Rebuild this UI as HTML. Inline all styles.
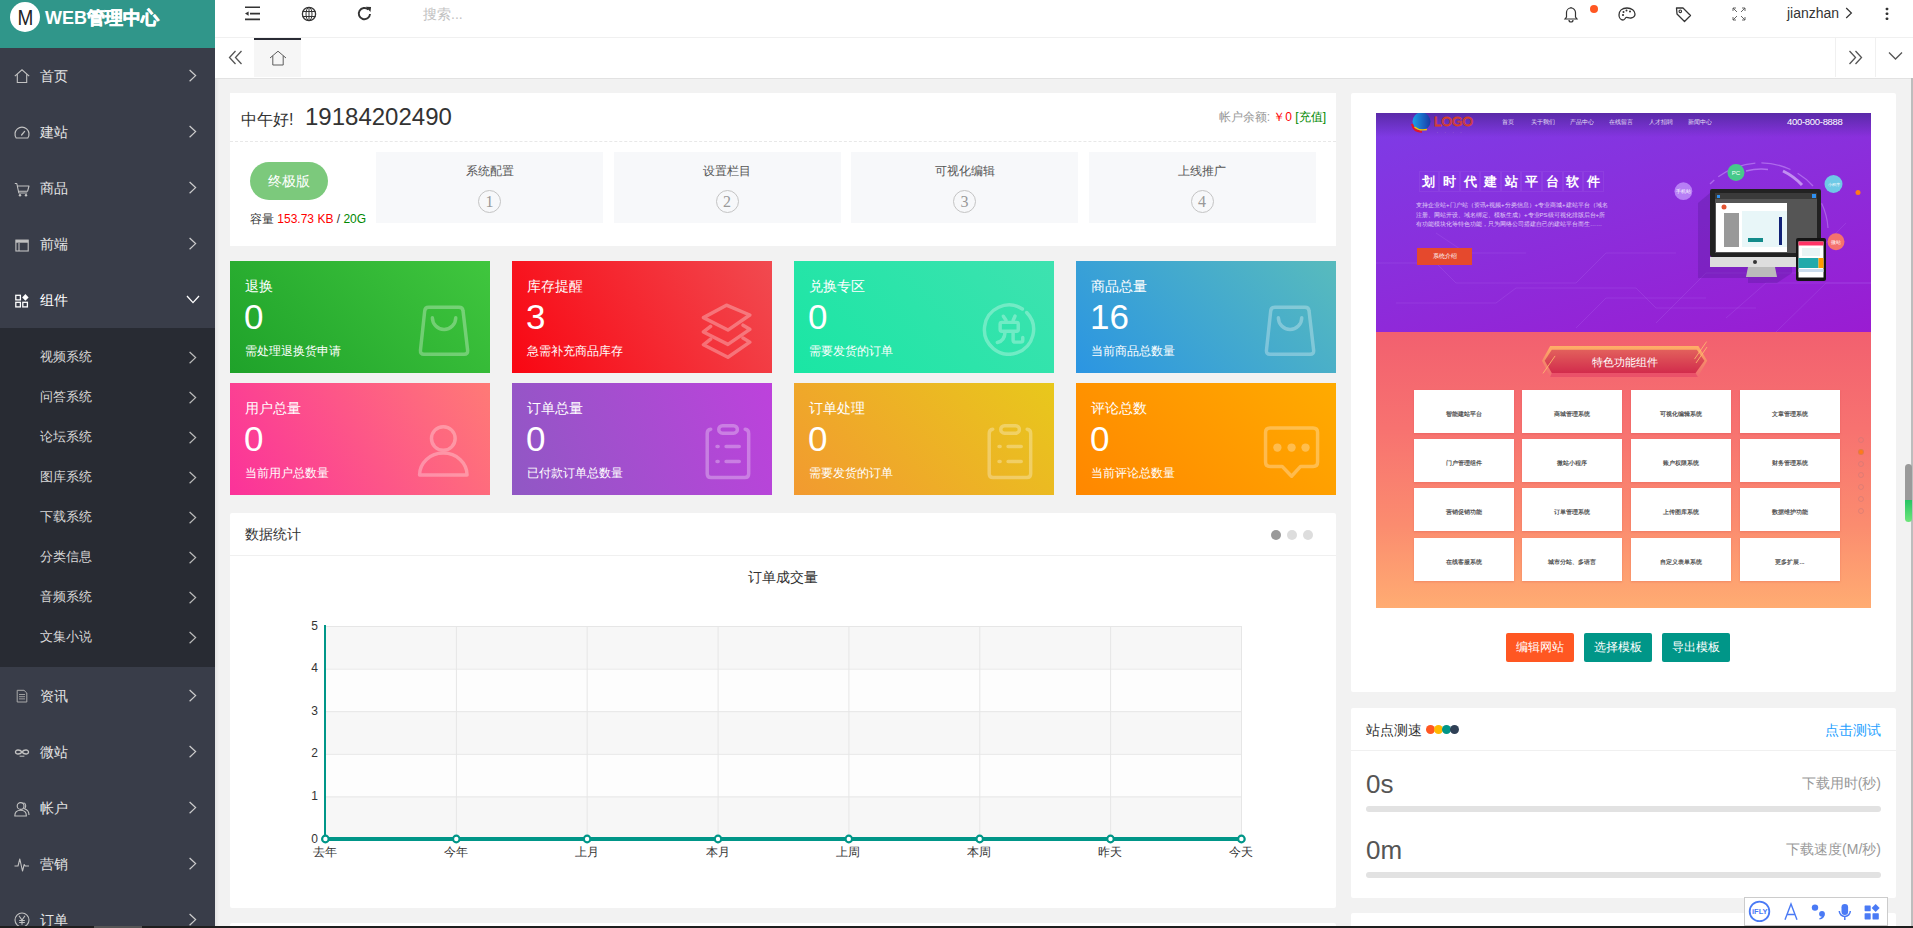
<!DOCTYPE html><html><head><meta charset="utf-8"><style>
*{box-sizing:border-box;margin:0;padding:0}
html,body{width:1913px;height:928px;overflow:hidden;background:#f2f2f2;font-family:"Liberation Sans",sans-serif;font-size:14px;color:#333}
.a{position:absolute}
#side{left:0;top:0;width:215px;height:928px;background:#393d49;overflow:hidden}
#logo{left:0;top:0;width:215px;height:48px;background:#30968a}
.mi{position:absolute;left:0;width:215px;height:56px;color:#e6e6e6;font-size:14px}
.mi .t{position:absolute;left:40px;top:1px;line-height:56px}
.mi svg.ic{position:absolute;left:15px;top:21px}
.ar{position:absolute;left:186px}
.sub{position:absolute;left:0;top:328px;width:215px;height:339px;background:#282b33}
.si{position:absolute;left:0;width:215px;height:40px;color:#d8d8d8;font-size:13px}
.si .t{position:absolute;left:40px;top:1px;line-height:40px}
#hdr{left:215px;top:0;width:1698px;height:38px;background:#fff;border-bottom:1px solid #f0f0f0}
#tabs{left:215px;top:38px;width:1698px;height:41px;background:#fff;border-bottom:1px solid #e2e2e2}
.card{position:absolute;background:#fff;border-radius:2px}
.stat{position:absolute;width:260px;height:112px;color:#fff}
.stat .tt{position:absolute;left:15px;top:16px;font-size:14px;line-height:18px}
.stat .num{position:absolute;left:14px;top:37px;font-size:35px;line-height:38px}
.stat .ds{position:absolute;left:15px;top:82px;font-size:12px;line-height:16px}
.stat svg{position:absolute;left:179px;top:34px}
</style></head><body>
<div id="side" class="a">
<div id="logo" class="a"><div class="a" style="left:10px;top:2px;width:30px;height:30px;border-radius:50%;background:#fff;color:#222;font-size:20px;line-height:30px;text-align:center"><span style="display:inline-block;transform:scale(0.95,1.08)">M</span></div><div class="a" style="left:45px;top:6px;color:#fff;font-size:18px;font-weight:bold;line-height:24px">WEB<span style="-webkit-text-stroke:0.6px #fff">管理中心</span></div></div>
<div class="mi" style="top:47px;color:#e6e6e6"><svg class="ic" width="16" height="16" viewBox="0 0 16 16" style="left:14px;top:21px"><path d="M0.8 8.2 L8 1.8 L15.2 8.2 M3.3 6.2 V14.5 H12.7 V6.2" fill="none" stroke="#c2c2c2" stroke-width="1.1"/></svg><span class="t">首页</span>
<svg class="ar" width="16" height="16" viewBox="0 0 16 16" style="top:21px"><path d="M3.6 2 L9.6 7.6 L3.6 13.2" fill="none" stroke="#ccc" stroke-width="1.25"/></svg>
</div>
<div class="mi" style="top:103px;color:#e6e6e6"><svg class="ic" width="16" height="16" viewBox="0 0 16 16" style="left:14px;top:21px"><path d="M2.2 14 A7 7 0 1 1 13.8 14 Z" fill="none" stroke="#c2c2c2" stroke-width="1.2" stroke-linejoin="round"/><path d="M7.6 11 L10.6 7.4" stroke="#c2c2c2" stroke-width="1.3" stroke-linecap="round"/></svg><span class="t">建站</span>
<svg class="ar" width="16" height="16" viewBox="0 0 16 16" style="top:21px"><path d="M3.6 2 L9.6 7.6 L3.6 13.2" fill="none" stroke="#ccc" stroke-width="1.25"/></svg>
</div>
<div class="mi" style="top:159px;color:#e6e6e6"><svg class="ic" width="16" height="16" viewBox="0 0 16 16" style="left:14px;top:22px"><path d="M0.8 2.5 H2.8 L4.8 12 H13.2 M3.8 5 H15 L13.6 10.2 H4.5" fill="none" stroke="#c2c2c2" stroke-width="1.1" stroke-linejoin="round"/><circle cx="6" cy="14.3" r="1.2" fill="#c2c2c2"/><circle cx="12" cy="14.3" r="1.2" fill="#c2c2c2"/></svg><span class="t">商品</span>
<svg class="ar" width="16" height="16" viewBox="0 0 16 16" style="top:21px"><path d="M3.6 2 L9.6 7.6 L3.6 13.2" fill="none" stroke="#ccc" stroke-width="1.25"/></svg>
</div>
<div class="mi" style="top:215px;color:#e6e6e6"><svg class="ic" width="16" height="16" viewBox="0 0 16 16" style="left:14px;top:22px"><rect x="1.9" y="3.1" width="12.3" height="10.9" fill="none" stroke="#c2c2c2" stroke-width="1.1"/><rect x="1.9" y="3.1" width="12.3" height="2.6" fill="#c2c2c2"/><path d="M5 6 V14" stroke="#c2c2c2" stroke-width="1.1"/></svg><span class="t">前端</span>
<svg class="ar" width="16" height="16" viewBox="0 0 16 16" style="top:21px"><path d="M3.6 2 L9.6 7.6 L3.6 13.2" fill="none" stroke="#ccc" stroke-width="1.25"/></svg>
</div>
<div class="mi" style="top:271px;color:#fff"><svg class="ic" width="16" height="16" viewBox="0 0 16 16" style="left:14px;top:22px"><rect x="1.8" y="2.3" width="4.6" height="4.6" fill="none" stroke="#fff" stroke-width="1.3"/><rect x="1.8" y="9.3" width="4.6" height="4.6" fill="none" stroke="#fff" stroke-width="1.3"/><rect x="8.8" y="9.3" width="4.6" height="4.6" fill="none" stroke="#fff" stroke-width="1.3"/><path d="M11.4 1.1 L14.6 4.4 L11.4 7.7 L8.2 4.4Z" fill="#fff"/></svg><span class="t">组件</span>
<svg class="ar" width="16" height="16" viewBox="0 0 16 16" style="top:21px;left:185px"><path d="M2 4 L8 10.6 L14 4" fill="none" stroke="#fff" stroke-width="1.3"/></svg>
</div>
<div class="sub">
<div class="si" style="top:8px"><span class="t">视频系统</span><svg class="ar" width="16" height="16" viewBox="0 0 16 16" style="top:14px"><path d="M3.6 2 L9.6 7.6 L3.6 13.2" fill="none" stroke="#bbb" stroke-width="1.25"/></svg></div>
<div class="si" style="top:48px"><span class="t">问答系统</span><svg class="ar" width="16" height="16" viewBox="0 0 16 16" style="top:14px"><path d="M3.6 2 L9.6 7.6 L3.6 13.2" fill="none" stroke="#bbb" stroke-width="1.25"/></svg></div>
<div class="si" style="top:88px"><span class="t">论坛系统</span><svg class="ar" width="16" height="16" viewBox="0 0 16 16" style="top:14px"><path d="M3.6 2 L9.6 7.6 L3.6 13.2" fill="none" stroke="#bbb" stroke-width="1.25"/></svg></div>
<div class="si" style="top:128px"><span class="t">图库系统</span><svg class="ar" width="16" height="16" viewBox="0 0 16 16" style="top:14px"><path d="M3.6 2 L9.6 7.6 L3.6 13.2" fill="none" stroke="#bbb" stroke-width="1.25"/></svg></div>
<div class="si" style="top:168px"><span class="t">下载系统</span><svg class="ar" width="16" height="16" viewBox="0 0 16 16" style="top:14px"><path d="M3.6 2 L9.6 7.6 L3.6 13.2" fill="none" stroke="#bbb" stroke-width="1.25"/></svg></div>
<div class="si" style="top:208px"><span class="t">分类信息</span><svg class="ar" width="16" height="16" viewBox="0 0 16 16" style="top:14px"><path d="M3.6 2 L9.6 7.6 L3.6 13.2" fill="none" stroke="#bbb" stroke-width="1.25"/></svg></div>
<div class="si" style="top:248px"><span class="t">音频系统</span><svg class="ar" width="16" height="16" viewBox="0 0 16 16" style="top:14px"><path d="M3.6 2 L9.6 7.6 L3.6 13.2" fill="none" stroke="#bbb" stroke-width="1.25"/></svg></div>
<div class="si" style="top:288px"><span class="t">文集小说</span><svg class="ar" width="16" height="16" viewBox="0 0 16 16" style="top:14px"><path d="M3.6 2 L9.6 7.6 L3.6 13.2" fill="none" stroke="#bbb" stroke-width="1.25"/></svg></div>
</div>
<div class="mi" style="top:667px"><svg class="ic" width="16" height="16" viewBox="0 0 16 16" style="left:14px;top:21px"><path d="M3.2 2.3 H10 L12.8 5 V14 H3.2 Z" fill="none" stroke="#aaa" stroke-width="1"/><path d="M5 6.5 H11 M5 8.7 H11 M5 10.9 H11" stroke="#aaa" stroke-width="0.9"/></svg><span class="t">资讯</span><svg class="ar" width="16" height="16" viewBox="0 0 16 16" style="top:21px"><path d="M3.6 2 L9.6 7.6 L3.6 13.2" fill="none" stroke="#ccc" stroke-width="1.25"/></svg></div>
<div class="mi" style="top:723px"><svg class="ic" width="16" height="16" viewBox="0 0 16 16" style="left:14px;top:21px"><path d="M8 8 C6.2 5.5 1.5 5.3 1.5 8 C1.5 10.7 6.2 10.5 8 8 C9.8 5.5 14.5 5.3 14.5 8 C14.5 10.7 9.8 10.5 8 8 Z" fill="none" stroke="#c2c2c2" stroke-width="1.4"/><path d="M5.6 12.2 H10.4" stroke="#c2c2c2" stroke-width="1"/></svg><span class="t">微站</span><svg class="ar" width="16" height="16" viewBox="0 0 16 16" style="top:21px"><path d="M3.6 2 L9.6 7.6 L3.6 13.2" fill="none" stroke="#ccc" stroke-width="1.25"/></svg></div>
<div class="mi" style="top:779px"><svg class="ic" width="16" height="16" viewBox="0 0 16 16" style="left:14px;top:22px"><circle cx="6.6" cy="5" r="3.4" fill="none" stroke="#c2c2c2" stroke-width="1.1"/><path d="M0.8 15 C0.8 10.5 3.5 9.2 6.6 9.2 C9.7 9.2 12.4 10.5 12.4 15 Z" fill="none" stroke="#c2c2c2" stroke-width="1.1" stroke-linejoin="round"/><path d="M9.6 1.8 C12 2.2 12.4 6 10.6 7.8 C13.5 8.8 15 10.5 15 14" fill="none" stroke="#c2c2c2" stroke-width="1.1"/></svg><span class="t">帐户</span><svg class="ar" width="16" height="16" viewBox="0 0 16 16" style="top:21px"><path d="M3.6 2 L9.6 7.6 L3.6 13.2" fill="none" stroke="#ccc" stroke-width="1.25"/></svg></div>
<div class="mi" style="top:835px"><svg class="ic" width="16" height="16" viewBox="0 0 16 16" style="left:14px;top:22px"><path d="M0.5 9 H4 L5.8 2 L8.5 14 L10.2 7.5 L11.2 9 H15" fill="none" stroke="#c2c2c2" stroke-width="1.1" stroke-linejoin="round"/></svg><span class="t">营销</span><svg class="ar" width="16" height="16" viewBox="0 0 16 16" style="top:21px"><path d="M3.6 2 L9.6 7.6 L3.6 13.2" fill="none" stroke="#ccc" stroke-width="1.25"/></svg></div>
<div class="mi" style="top:891px"><svg class="ic" width="16" height="16" viewBox="0 0 16 16" style="left:14px;top:21px"><circle cx="8" cy="8" r="7" fill="none" stroke="#c2c2c2" stroke-width="1.1"/><path d="M5 3.8 L8 8 L11 3.8 M8 8 V12.8 M5.2 8.5 H10.8 M5.2 10.5 H10.8" fill="none" stroke="#c2c2c2" stroke-width="1.1"/></svg><span class="t">订单</span><svg class="ar" width="16" height="16" viewBox="0 0 16 16" style="top:21px"><path d="M3.6 2 L9.6 7.6 L3.6 13.2" fill="none" stroke="#ccc" stroke-width="1.25"/></svg></div>
</div>
<div id="hdr" class="a">
<svg class="a" style="left:29px;top:6px" width="18" height="16" viewBox="0 0 18 16"><path d="M1 1.3 H16 M6 7.6 H16 M1 13.4 H16" stroke="#333" stroke-width="1.6"/><path d="M4.6 5.4 L1 7.6 L4.6 9.8 Z" fill="#333"/></svg>
<svg class="a" style="left:86px;top:6px" width="16" height="16" viewBox="0 0 16 16"><circle cx="8" cy="8" r="6.6" fill="none" stroke="#333" stroke-width="1.3"/><ellipse cx="8" cy="8" rx="3" ry="6.6" fill="none" stroke="#333" stroke-width="1"/><path d="M1.5 5.5 H14.5 M1.5 10.5 H14.5 M8 1.4 V14.6" stroke="#333" stroke-width="1"/></svg>
<svg class="a" style="left:141px;top:5px" width="17" height="17" viewBox="0 0 16 16"><path d="M13.2 8.5 A5.3 5.3 0 1 1 11.6 4.3" fill="none" stroke="#333" stroke-width="1.8"/><path d="M9.2 1.6 L14.2 1.8 L13.6 6.6 Z" fill="#333"/></svg>
<div class="a" style="left:208px;top:6px;font-size:14px;line-height:16px;color:#c2c2c2">搜索...</div>
<svg class="a" style="left:1348px;top:6px" width="16" height="17" viewBox="0 0 16 17"><path d="M2 13 H14 L12.5 11 V6.5 A4.5 4.5 0 0 0 3.5 6.5 V11 Z" fill="none" stroke="#333" stroke-width="1.2"/><path d="M6 14 A2 2 0 0 0 10 14" fill="none" stroke="#333" stroke-width="1.2"/><path d="M8 1 V2" stroke="#333" stroke-width="1.2"/></svg>
<div class="a" style="left:1375px;top:5px;width:8px;height:8px;border-radius:50%;background:#ff5722"></div>
<svg class="a" style="left:1403px;top:7px" width="18" height="15" viewBox="0 0 18 15"><path d="M9 1 C4 1 1 4 1 8 C1 11 3 13 5 13 C7 13 7 11 8 10.5 C9 10 11 11.5 13 11 C16 10.5 17 8.5 17 7 C17 3.5 13.5 1 9 1 Z" fill="none" stroke="#333" stroke-width="1.3"/><circle cx="5" cy="8" r="1.1" fill="#333"/><circle cx="5.5" cy="5" r="1" fill="#333"/><circle cx="8.5" cy="3.5" r="1" fill="#333"/><circle cx="12" cy="4.5" r="1" fill="#333"/></svg>
<svg class="a" style="left:1460px;top:6px" width="17" height="17" viewBox="0 0 17 17"><path d="M1.5 2 L2 8 L9.5 15.5 L15.5 9.5 L8 2 Z" fill="none" stroke="#333" stroke-width="1.3" stroke-linejoin="round"/><circle cx="5.3" cy="5.3" r="1.3" fill="none" stroke="#333" stroke-width="1.1"/></svg>
<svg class="a" style="left:1517px;top:7px" width="14" height="14" viewBox="0 0 14 14"><path d="M1 4 V1 H4 M1 1 L5 5 M10 1 H13 V4 M13 1 L9 5 M1 10 V13 H4 M1 13 L5 9 M13 10 V13 H10 M13 13 L9 9" fill="none" stroke="#555" stroke-width="0.9"/></svg>
<div class="a" style="left:1572px;top:5px;font-size:14px;line-height:16px;color:#333">jianzhan</div>
<svg class="a" style="left:1629px;top:6px" width="10" height="14" viewBox="0 0 10 14"><path d="M2.2 2 L7.4 7 L2.2 12" fill="none" stroke="#333" stroke-width="1.2"/></svg>
<svg class="a" style="left:1670px;top:6px" width="4" height="16" viewBox="0 0 4 16"><rect x="0.7" y="1.7" width="2.6" height="2.6" rx="0.8" fill="#333"/><rect x="0.7" y="6.5" width="2.6" height="2.6" rx="0.8" fill="#333"/><rect x="0.7" y="11.4" width="2.6" height="2.6" rx="0.8" fill="#333"/></svg>
</div>
<div id="tabs" class="a">
<svg class="a" style="left:13px;top:12px" width="15" height="15" viewBox="0 0 15 15"><path d="M7.5 1 L1.5 7.5 L7.5 14 M13.5 1 L7.5 7.5 L13.5 14" fill="none" stroke="#555" stroke-width="1.3"/></svg>
<div class="a" style="left:39px;top:0;width:47px;height:39px;background:#f6f6f6;border-top:2px solid #292b34"></div>
<svg class="a" style="left:54px;top:12px" width="18" height="16" viewBox="0 0 18 16"><path d="M1 8 L9 1.2 L17 8 M3.8 5.8 V15 H14.2 V5.8" fill="none" stroke="#555" stroke-width="0.95"/></svg>
<div class="a" style="left:1620px;top:0;width:1px;height:39px;background:#f0f0f0"></div>
<div class="a" style="left:1660px;top:0;width:1px;height:39px;background:#f0f0f0"></div>
<svg class="a" style="left:1633px;top:12px" width="15" height="15" viewBox="0 0 15 15"><path d="M1.5 1 L7.5 7.5 L1.5 14 M7.5 1 L13.5 7.5 L7.5 14" fill="none" stroke="#555" stroke-width="1.3"/></svg>
<svg class="a" style="left:1673px;top:13px" width="15" height="10" viewBox="0 0 15 10"><path d="M1 1.5 L7.5 8 L14 1.5" fill="none" stroke="#555" stroke-width="1.3"/></svg>
</div>
<div class="card" style="left:230px;top:93px;width:1106px;height:153px;border-radius:0">
<div class="a" style="left:11px;top:17px;font-size:16px;line-height:20px;color:#333">中午好!</div>
<div class="a" style="left:75px;top:10px;font-size:24px;line-height:28px;color:#333">19184202490</div>
<div class="a" style="right:10px;top:17px;font-size:12px;line-height:14px;color:#999">帐户余额: <span style="color:#f00">￥0</span> <span style="color:#080">[充值]</span></div>
<div class="a" style="left:0;top:48px;width:1106px;height:0;border-top:1px dashed #e8e8e8"></div>
<div class="a" style="left:20px;top:69px;width:78px;height:38px;border-radius:19px;background:#7cc97c;color:#fff;font-size:14px;line-height:38px;text-align:center">终极版</div>
<div class="a" style="left:20px;top:118px;font-size:12px;line-height:16px;color:#333">容量 <span style="color:#f00">153.73 KB</span> / <span style="color:#080">20G</span></div>
<div class="a" style="left:146.0px;top:59px;width:227px;height:71px;background:#f7f8fa"><div class="a" style="left:0;top:11px;width:227px;text-align:center;font-size:12px;line-height:16px;color:#555">系统配置</div><div class="a" style="left:102px;top:38px;width:23px;height:23px;border-radius:50%;border:1px solid #c4c4c4;text-align:center;font-family:Liberation Serif,serif;font-size:16px;line-height:21px;color:#999">1</div></div>
<div class="a" style="left:383.5px;top:59px;width:227px;height:71px;background:#f7f8fa"><div class="a" style="left:0;top:11px;width:227px;text-align:center;font-size:12px;line-height:16px;color:#555">设置栏目</div><div class="a" style="left:102px;top:38px;width:23px;height:23px;border-radius:50%;border:1px solid #c4c4c4;text-align:center;font-family:Liberation Serif,serif;font-size:16px;line-height:21px;color:#999">2</div></div>
<div class="a" style="left:621.0px;top:59px;width:227px;height:71px;background:#f7f8fa"><div class="a" style="left:0;top:11px;width:227px;text-align:center;font-size:12px;line-height:16px;color:#555">可视化编辑</div><div class="a" style="left:102px;top:38px;width:23px;height:23px;border-radius:50%;border:1px solid #c4c4c4;text-align:center;font-family:Liberation Serif,serif;font-size:16px;line-height:21px;color:#999">3</div></div>
<div class="a" style="left:858.5px;top:59px;width:227px;height:71px;background:#f7f8fa"><div class="a" style="left:0;top:11px;width:227px;text-align:center;font-size:12px;line-height:16px;color:#555">上线推广</div><div class="a" style="left:102px;top:38px;width:23px;height:23px;border-radius:50%;border:1px solid #c4c4c4;text-align:center;font-family:Liberation Serif,serif;font-size:16px;line-height:21px;color:#999">4</div></div>
</div>
<div class="stat" style="left:230px;top:261px;background:linear-gradient(45deg,#1fa22a,#40c63e)"><div class="tt">退换</div><div class="num">0</div><div class="ds">需处理退换货申请</div><svg width="80" height="70" viewBox="0 0 1061 928" style="opacity:.3"><path d="M262 163 H663 Q713 163 717 213 L778 735 Q782 785 732 785 H198 Q148 785 152 735 L208 213 Q212 163 262 163 Z" fill="none" stroke="#fff" stroke-width="46"/><path d="M310 302 A155 155 0 0 0 620 302" fill="none" stroke="#fff" stroke-width="46" stroke-linecap="round"/></svg></div>
<div class="stat" style="left:512px;top:261px;background:linear-gradient(60deg,#f90612,#f14a50)"><div class="tt">库存提醒</div><div class="num">3</div><div class="ds">急需补充商品库存</div><svg width="80" height="70" viewBox="0 0 1061 928" style="opacity:.3"><g fill="none" stroke="#fff" stroke-width="46" stroke-linejoin="round" stroke-linecap="round"><path d="M165 300 L470 135 L780 265 L490 465 Z"/><path d="M260 415 L165 490 L490 655 L780 455 L690 400"/><path d="M260 585 L165 660 L490 825 L780 625 L690 570"/></g></svg></div>
<div class="stat" style="left:794px;top:261px;background:linear-gradient(45deg,#1ae6a4,#3ee2b0)"><div class="tt">兑换专区</div><div class="num">0</div><div class="ds">需要发货的订单</div><svg width="80" height="70" viewBox="0 0 1061 928" style="opacity:.3"><g fill="none" stroke="#fff" stroke-width="46" stroke-linecap="round" stroke-linejoin="round"><path d="M655 185 A326 326 0 1 0 712 232"/><path d="M402 282 L438 335 M558 278 L532 338"/><rect x="360" y="363" width="240" height="117" rx="22"/><path d="M425 492 Q420 610 322 630"/><path d="M532 492 V595 Q532 625 562 625 H632 Q660 625 660 597 V562"/></g></svg></div>
<div class="stat" style="left:1076px;top:261px;background:linear-gradient(45deg,#2b95e2,#58bbbd)"><div class="tt">商品总量</div><div class="num">16</div><div class="ds">当前商品总数量</div><svg width="80" height="70" viewBox="0 0 1061 928" style="opacity:.3"><path d="M262 163 H663 Q713 163 717 213 L778 735 Q782 785 732 785 H198 Q148 785 152 735 L208 213 Q212 163 262 163 Z" fill="none" stroke="#fff" stroke-width="46"/><path d="M310 302 A155 155 0 0 0 620 302" fill="none" stroke="#fff" stroke-width="46" stroke-linecap="round"/></svg></div>
<div class="stat" style="left:230px;top:383px;background:linear-gradient(60deg,#fb329a,#ff7a76)"><div class="tt">用户总量</div><div class="num">0</div><div class="ds">当前用户总数量</div><svg width="80" height="70" viewBox="0 0 1061 928" style="opacity:.3"><g fill="none" stroke="#fff" stroke-width="46"><circle cx="455" cy="285" r="157"/><path d="M140 770 A315 292 0 0 1 770 770 Z" stroke-linejoin="round"/></g></svg></div>
<div class="stat" style="left:512px;top:383px;background:linear-gradient(70deg,#9058c4,#bd42dc)"><div class="tt">订单总量</div><div class="num">0</div><div class="ds">已付款订单总数量</div><svg width="80" height="70" viewBox="0 0 1061 928" style="opacity:.3"><g fill="none" stroke="#fff" stroke-width="46" stroke-linecap="round"><path d="M262 162 Q215 167 215 217 V752 Q215 802 265 802 H715 Q765 802 765 752 V217 Q765 167 718 162"/><rect x="368" y="115" width="247" height="100" rx="50"/><path d="M345 390 H360 M465 390 H640 M345 590 H360 M465 590 H640"/></g></svg></div>
<div class="stat" style="left:794px;top:383px;background:linear-gradient(45deg,#f29a30,#e8c81c)"><div class="tt">订单处理</div><div class="num">0</div><div class="ds">需要发货的订单</div><svg width="80" height="70" viewBox="0 0 1061 928" style="opacity:.3"><g fill="none" stroke="#fff" stroke-width="46" stroke-linecap="round"><path d="M262 162 Q215 167 215 217 V752 Q215 802 265 802 H715 Q765 802 765 752 V217 Q765 167 718 162"/><rect x="368" y="115" width="247" height="100" rx="50"/><path d="M345 390 H360 M465 390 H640 M345 590 H360 M465 590 H640"/></g></svg></div>
<div class="stat" style="left:1076px;top:383px;background:linear-gradient(45deg,#ff8700,#ffab00)"><div class="tt">评论总数</div><div class="num">0</div><div class="ds">当前评论总数量</div><svg width="80" height="70" viewBox="0 0 1061 928" style="opacity:.3"><path d="M200 145 H770 Q830 145 830 205 V595 Q830 655 770 655 H605 L485 785 L360 655 H200 Q140 655 140 595 V205 Q140 145 200 145 Z" fill="none" stroke="#fff" stroke-width="46" stroke-linejoin="round"/><circle cx="297" cy="405" r="55" fill="#fff"/><circle cx="485" cy="405" r="55" fill="#fff"/><circle cx="670" cy="405" r="55" fill="#fff"/></svg></div>
<div class="card" style="left:230px;top:513px;width:1106px;height:395px">
<div class="a" style="left:15px;top:12px;font-size:14px;line-height:18px;color:#333">数据统计</div>
<div class="a" style="left:0;top:42px;width:1106px;height:1px;background:#f0f0f0"></div>
<div class="a" style="left:1041px;top:17px;width:10px;height:10px;border-radius:50%;background:#999"></div>
<div class="a" style="left:1057px;top:17px;width:10px;height:10px;border-radius:50%;background:#ddd"></div>
<div class="a" style="left:1073px;top:17px;width:10px;height:10px;border-radius:50%;background:#ddd"></div>
<div class="a" style="left:0;top:55px;width:1106px;text-align:center;font-size:14px;line-height:18px;color:#333">订单成交量</div>
</div>
<svg class="a" style="left:0;top:0" width="1913" height="928"><rect x="325" y="626.0" width="916" height="42.60000000000002" fill="#f7f7f7"/><rect x="325" y="668.6" width="916" height="42.60000000000002" fill="#fdfdfd"/><rect x="325" y="711.2" width="916" height="42.59999999999991" fill="#f7f7f7"/><rect x="325" y="753.8" width="916" height="42.60000000000002" fill="#fdfdfd"/><rect x="325" y="796.4" width="916" height="42.60000000000002" fill="#f7f7f7"/><line x1="325" y1="626.5" x2="1241" y2="626.5" stroke="#e6e6e6" stroke-width="1"/><text x="318" y="629.5" font-size="12" text-anchor="end" fill="#333" font-family="Liberation Sans">5</text><line x1="325" y1="669.1" x2="1241" y2="669.1" stroke="#e6e6e6" stroke-width="1"/><text x="318" y="672.1" font-size="12" text-anchor="end" fill="#333" font-family="Liberation Sans">4</text><line x1="325" y1="711.7" x2="1241" y2="711.7" stroke="#e6e6e6" stroke-width="1"/><text x="318" y="714.7" font-size="12" text-anchor="end" fill="#333" font-family="Liberation Sans">3</text><line x1="325" y1="754.3" x2="1241" y2="754.3" stroke="#e6e6e6" stroke-width="1"/><text x="318" y="757.3" font-size="12" text-anchor="end" fill="#333" font-family="Liberation Sans">2</text><line x1="325" y1="796.9" x2="1241" y2="796.9" stroke="#e6e6e6" stroke-width="1"/><text x="318" y="799.9" font-size="12" text-anchor="end" fill="#333" font-family="Liberation Sans">1</text><line x1="325" y1="839.5" x2="1241" y2="839.5" stroke="#e6e6e6" stroke-width="1"/><text x="318" y="842.5" font-size="12" text-anchor="end" fill="#333" font-family="Liberation Sans">0</text><line x1="325.5" y1="626" x2="325.5" y2="839" stroke="#e6e6e6" stroke-width="1"/><text x="325.0" y="856" font-size="12" text-anchor="middle" fill="#333" font-family="Liberation Sans">去年</text><line x1="456.4" y1="626" x2="456.4" y2="839" stroke="#e6e6e6" stroke-width="1"/><text x="455.9" y="856" font-size="12" text-anchor="middle" fill="#333" font-family="Liberation Sans">今年</text><line x1="587.2" y1="626" x2="587.2" y2="839" stroke="#e6e6e6" stroke-width="1"/><text x="586.7" y="856" font-size="12" text-anchor="middle" fill="#333" font-family="Liberation Sans">上月</text><line x1="718.1" y1="626" x2="718.1" y2="839" stroke="#e6e6e6" stroke-width="1"/><text x="717.6" y="856" font-size="12" text-anchor="middle" fill="#333" font-family="Liberation Sans">本月</text><line x1="848.9" y1="626" x2="848.9" y2="839" stroke="#e6e6e6" stroke-width="1"/><text x="848.4" y="856" font-size="12" text-anchor="middle" fill="#333" font-family="Liberation Sans">上周</text><line x1="979.8" y1="626" x2="979.8" y2="839" stroke="#e6e6e6" stroke-width="1"/><text x="979.3" y="856" font-size="12" text-anchor="middle" fill="#333" font-family="Liberation Sans">本周</text><line x1="1110.6" y1="626" x2="1110.6" y2="839" stroke="#e6e6e6" stroke-width="1"/><text x="1110.1" y="856" font-size="12" text-anchor="middle" fill="#333" font-family="Liberation Sans">昨天</text><line x1="1241.5" y1="626" x2="1241.5" y2="839" stroke="#e6e6e6" stroke-width="1"/><text x="1241.0" y="856" font-size="12" text-anchor="middle" fill="#333" font-family="Liberation Sans">今天</text><line x1="325" y1="625" x2="325" y2="839" stroke="#009688" stroke-width="2"/><line x1="325" y1="839" x2="1241" y2="839" stroke="#009688" stroke-width="4"/><circle cx="325.4" cy="839" r="3.3" fill="#fff" stroke="#009688" stroke-width="2.2"/><circle cx="456.3" cy="839" r="3.3" fill="#fff" stroke="#009688" stroke-width="2.2"/><circle cx="587.1" cy="839" r="3.3" fill="#fff" stroke="#009688" stroke-width="2.2"/><circle cx="718.0" cy="839" r="3.3" fill="#fff" stroke="#009688" stroke-width="2.2"/><circle cx="848.8" cy="839" r="3.3" fill="#fff" stroke="#009688" stroke-width="2.2"/><circle cx="979.7" cy="839" r="3.3" fill="#fff" stroke="#009688" stroke-width="2.2"/><circle cx="1110.5" cy="839" r="3.3" fill="#fff" stroke="#009688" stroke-width="2.2"/><circle cx="1241.4" cy="839" r="3.3" fill="#fff" stroke="#009688" stroke-width="2.2"/></svg>
<div class="card" style="left:230px;top:923px;width:1106px;height:20px"></div>
<div class="card" style="left:1351px;top:93px;width:545px;height:599px"></div>
<div class="a" style="left:1376px;top:113px;width:495px;height:495px;overflow:hidden"><div class="a" style="left:0;top:0;width:495px;height:219px;background:linear-gradient(165deg,#7d3ce6 0%,#8a2fdc 45%,#9a1cd2 100%)"></div><div class="a" style="left:0;top:0;width:495px;height:24px;background:linear-gradient(180deg,#5a2aa8,rgba(110,50,210,0))"></div><svg class="a" style="left:0;top:0" width="495" height="219"><g stroke="#b46cf0" stroke-opacity=".25" stroke-width="1" fill="none"><path d="M0 150 H60 L80 170 H200 L230 140 H300"/><path d="M20 190 H120 L140 175 H260 L280 195 H380"/><path d="M280 210 L330 160 H420 L470 110"/><path d="M350 205 L390 170 H495"/><path d="M60 120 L90 140 H150"/><path d="M200 215 L230 185 H330"/><path d="M400 219 L450 170 H495"/></g></svg><svg class="a" style="left:34px;top:0" width="80" height="22"><defs><linearGradient id="gl" x1="0" y1="0" x2="1" y2="0"><stop offset="0" stop-color="#1aa0e8"/><stop offset="1" stop-color="#1a3aa8"/></linearGradient></defs><circle cx="11.5" cy="8.5" r="9" fill="url(#gl)"/><path d="M2 11 Q4 19 12 18.5" stroke="#e0182a" stroke-width="2.2" fill="none"/><path d="M4.5 14 Q9 18 17 16.5" stroke="#f5c400" stroke-width="1.3" fill="none"/><text x="24" y="13" font-size="13.5" fill="none" stroke="#d8402a" stroke-width=".9" font-family="Liberation Sans">LOGO</text><text x="27" y="19.5" font-size="3" fill="#ccb" letter-spacing="7" font-family="Liberation Sans">....</text></svg><div class="a" style="left:126px;top:5px;font-size:6px;line-height:8px;color:#fff;opacity:.85;white-space:nowrap">首页</div><div class="a" style="left:155px;top:5px;font-size:6px;line-height:8px;color:#fff;opacity:.85;white-space:nowrap">关于我们</div><div class="a" style="left:194px;top:5px;font-size:6px;line-height:8px;color:#fff;opacity:.85;white-space:nowrap">产品中心</div><div class="a" style="left:233px;top:5px;font-size:6px;line-height:8px;color:#fff;opacity:.85;white-space:nowrap">在线留言</div><div class="a" style="left:273px;top:5px;font-size:6px;line-height:8px;color:#fff;opacity:.85;white-space:nowrap">人才招聘</div><div class="a" style="left:312px;top:5px;font-size:6px;line-height:8px;color:#fff;opacity:.85;white-space:nowrap">新闻中心</div><div class="a" style="left:411px;top:4px;font-size:9.5px;line-height:10px;color:#fff;letter-spacing:-0.3px">400-800-8888</div><div class="a" style="left:42.70px;top:58px;width:20.55px;height:21px;border:1px solid rgba(255,255,255,.06);color:#fff;font-size:13px;line-height:20px;text-align:center;font-weight:bold;font-family:Liberation Serif,serif">划</div><div class="a" style="left:63.25px;top:58px;width:20.55px;height:21px;border:1px solid rgba(255,255,255,.06);color:#fff;font-size:13px;line-height:20px;text-align:center;font-weight:bold;font-family:Liberation Serif,serif">时</div><div class="a" style="left:83.80px;top:58px;width:20.55px;height:21px;border:1px solid rgba(255,255,255,.06);color:#fff;font-size:13px;line-height:20px;text-align:center;font-weight:bold;font-family:Liberation Serif,serif">代</div><div class="a" style="left:104.35px;top:58px;width:20.55px;height:21px;border:1px solid rgba(255,255,255,.06);color:#fff;font-size:13px;line-height:20px;text-align:center;font-weight:bold;font-family:Liberation Serif,serif">建</div><div class="a" style="left:124.90px;top:58px;width:20.55px;height:21px;border:1px solid rgba(255,255,255,.06);color:#fff;font-size:13px;line-height:20px;text-align:center;font-weight:bold;font-family:Liberation Serif,serif">站</div><div class="a" style="left:145.45px;top:58px;width:20.55px;height:21px;border:1px solid rgba(255,255,255,.06);color:#fff;font-size:13px;line-height:20px;text-align:center;font-weight:bold;font-family:Liberation Serif,serif">平</div><div class="a" style="left:166.00px;top:58px;width:20.55px;height:21px;border:1px solid rgba(255,255,255,.06);color:#fff;font-size:13px;line-height:20px;text-align:center;font-weight:bold;font-family:Liberation Serif,serif">台</div><div class="a" style="left:186.55px;top:58px;width:20.55px;height:21px;border:1px solid rgba(255,255,255,.06);color:#fff;font-size:13px;line-height:20px;text-align:center;font-weight:bold;font-family:Liberation Serif,serif">软</div><div class="a" style="left:207.10px;top:58px;width:20.55px;height:21px;border:1px solid rgba(255,255,255,.06);color:#fff;font-size:13px;line-height:20px;text-align:center;font-weight:bold;font-family:Liberation Serif,serif">件</div><div class="a" style="left:40px;top:88px;width:208px;font-size:6px;line-height:9.5px;color:#fff;opacity:.75;white-space:nowrap">支持企业站+门户站（资讯+视频+分类信息）+专业商城+建站平台（域名<br>注册、网站开设、域名绑定、模板生成）+专业PS级可视化排版后台+所<br>有功能模块化等特色功能，只为网络公司搭建自己的建站平台而生……</div><div class="a" style="left:41px;top:135px;width:55px;height:17px;background:#e5492d;color:#fff;font-size:6px;line-height:17px;text-align:center">系统介绍</div><svg class="a" style="left:280px;top:40px" width="215" height="179" viewBox="0 0 215 179"><path d="M54 40 L42 50 L42 125 L92 125 L92 130 L121 130 L136 120 L136 104 L54 104 Z" fill="#5a1a9a" fill-opacity=".35"/><path d="M54 31 A71 71 0 0 1 157 33" fill="none" stroke="#d6b0ff" stroke-opacity=".45" stroke-width="1.3" stroke-dasharray="6 5 40 6 30 8 60"/><path d="M165.6 50.3 A67 67 0 0 1 172 75" fill="none" stroke="#d6b0ff" stroke-opacity=".4" stroke-width="1.2"/><path d="M90 18 A63 63 0 0 1 112 16.4" fill="none" stroke="#d6b0ff" stroke-opacity=".5" stroke-width="1.5"/><path d="M127 18 A65 65 0 0 1 146 32" fill="none" stroke="#e6d0ff" stroke-opacity=".6" stroke-width="3"/><rect x="54" y="36" width="111" height="68" rx="2" fill="#222"/><rect x="59" y="40" width="102" height="60" fill="#555"/><rect x="59" y="40" width="102" height="6" fill="#3a3a3a"/><rect x="61" y="42" width="3" height="3" fill="#2e8ff0"/><rect x="156" y="41" width="4" height="4" fill="#2e8ff0"/><rect x="60" y="50" width="71" height="49" fill="#fff"/><rect x="68" y="60" width="15" height="34" fill="#999"/><rect x="86" y="58" width="45" height="36" fill="#e8f6f8"/><circle cx="68" cy="54" r="2.5" fill="#e25533"/><rect x="92" y="85" width="15" height="4" fill="#138b8b"/><rect x="123" y="64" width="3" height="28" fill="#127"/><rect x="54" y="104" width="111" height="10" fill="#ddd"/><circle cx="99" cy="109" r="2" fill="#333"/><path d="M92 114 H119 L121 124 H90 Z" fill="#bbb"/><rect x="140" y="85" width="30" height="43" rx="2" fill="#151515"/><rect x="142.5" y="88.5" width="25" height="36" fill="#fff"/><rect x="142.5" y="88.5" width="25" height="4" fill="#f36"/><rect x="146" y="95" width="18" height="8" fill="#e8f4f4"/><rect x="142.5" y="105" width="20" height="10" fill="#2aa"/><rect x="162.5" y="105" width="5" height="10" fill="#f90"/><rect x="142.5" y="116" width="25" height="3" fill="#cde"/><circle cx="27.4" cy="38.2" r="8.9" fill="#b77ff5"/><text x="27.4" y="40" font-size="5" fill="#fff" text-anchor="middle">手机站</text><circle cx="80" cy="19.6" r="8.5" fill="#47c98b"/><text x="80" y="22" font-size="6" fill="#fff" text-anchor="middle">PC</text><circle cx="177.5" cy="31" r="9" fill="#6ec9e6"/><text x="177.5" y="33" font-size="4" fill="#fff" text-anchor="middle">小程序</text><circle cx="180" cy="88.8" r="8.5" fill="#f5726e"/><text x="180" y="91" font-size="5" fill="#fff" text-anchor="middle">微站</text><circle cx="202" cy="39.4" r="2.5" fill="#ff7a1a"/></svg><div class="a" style="left:0;top:219px;width:495px;height:276px;background:linear-gradient(180deg,#f2606f 0%,#f77270 35%,#fb8c6f 70%,#ffac72 100%)"></div><svg class="a" style="left:160px;top:228px" width="180" height="40" viewBox="0 0 180 40"><defs><linearGradient id="bn" x1="0" y1="0" x2="0" y2="1"><stop offset="0" stop-color="#e2605c"/><stop offset="1" stop-color="#d22c4c"/></linearGradient><linearGradient id="bo" x1="0" y1="0" x2="0" y2="1"><stop offset="0" stop-color="#ffb066"/><stop offset=".5" stop-color="#f58a6a"/><stop offset="1" stop-color="#f06a72"/></linearGradient></defs><path d="M6 19.8 L14.2 5 H162.4 L171.2 19.8 L161.8 36 H14.2 Z" fill="url(#bo)"/><path d="M8.7 19.8 L15.8 8.8 H160.8 L168.4 19.8 L159.6 31.9 H15.8 Z" fill="url(#bn)"/><path d="M15.8 31.9 H159.6 L161.8 36 H14.2 Z" fill="#e84a68" fill-opacity=".8"/><path d="M7 32.4 L19.1 14.9 M158.5 18.1 L170.6 0.6 M160 22 L171 6" stroke="#ffc070" stroke-width=".8"/><text x="88.6" y="24.6" font-size="10.6" fill="#fff" text-anchor="middle" font-family="Liberation Sans">特色功能组件</text></svg><div class="a" style="left:37.5px;top:277px;width:100px;height:43px;background:#fff;box-shadow:0 1px 2px rgba(200,60,60,.25)"><div class="a" style="left:0;top:19px;width:100px;text-align:center;font-size:6.2px;line-height:9px;color:#555;font-weight:bold;white-space:nowrap">智能建站平台</div></div><div class="a" style="left:146px;top:277px;width:100px;height:43px;background:#fff;box-shadow:0 1px 2px rgba(200,60,60,.25)"><div class="a" style="left:0;top:19px;width:100px;text-align:center;font-size:6.2px;line-height:9px;color:#555;font-weight:bold;white-space:nowrap">商城管理系统</div></div><div class="a" style="left:255px;top:277px;width:100px;height:43px;background:#fff;box-shadow:0 1px 2px rgba(200,60,60,.25)"><div class="a" style="left:0;top:19px;width:100px;text-align:center;font-size:6.2px;line-height:9px;color:#555;font-weight:bold;white-space:nowrap">可视化编辑系统</div></div><div class="a" style="left:364px;top:277px;width:100px;height:43px;background:#fff;box-shadow:0 1px 2px rgba(200,60,60,.25)"><div class="a" style="left:0;top:19px;width:100px;text-align:center;font-size:6.2px;line-height:9px;color:#555;font-weight:bold;white-space:nowrap">文章管理系统</div></div><div class="a" style="left:37.5px;top:326px;width:100px;height:43px;background:#fff;box-shadow:0 1px 2px rgba(200,60,60,.25)"><div class="a" style="left:0;top:19px;width:100px;text-align:center;font-size:6.2px;line-height:9px;color:#555;font-weight:bold;white-space:nowrap">门户管理组件</div></div><div class="a" style="left:146px;top:326px;width:100px;height:43px;background:#fff;box-shadow:0 1px 2px rgba(200,60,60,.25)"><div class="a" style="left:0;top:19px;width:100px;text-align:center;font-size:6.2px;line-height:9px;color:#555;font-weight:bold;white-space:nowrap">微站小程序</div></div><div class="a" style="left:255px;top:326px;width:100px;height:43px;background:#fff;box-shadow:0 1px 2px rgba(200,60,60,.25)"><div class="a" style="left:0;top:19px;width:100px;text-align:center;font-size:6.2px;line-height:9px;color:#555;font-weight:bold;white-space:nowrap">账户权限系统</div></div><div class="a" style="left:364px;top:326px;width:100px;height:43px;background:#fff;box-shadow:0 1px 2px rgba(200,60,60,.25)"><div class="a" style="left:0;top:19px;width:100px;text-align:center;font-size:6.2px;line-height:9px;color:#555;font-weight:bold;white-space:nowrap">财务管理系统</div></div><div class="a" style="left:37.5px;top:375px;width:100px;height:43px;background:#fff;box-shadow:0 1px 2px rgba(200,60,60,.25)"><div class="a" style="left:0;top:19px;width:100px;text-align:center;font-size:6.2px;line-height:9px;color:#555;font-weight:bold;white-space:nowrap">营销促销功能</div></div><div class="a" style="left:146px;top:375px;width:100px;height:43px;background:#fff;box-shadow:0 1px 2px rgba(200,60,60,.25)"><div class="a" style="left:0;top:19px;width:100px;text-align:center;font-size:6.2px;line-height:9px;color:#555;font-weight:bold;white-space:nowrap">订单管理系统</div></div><div class="a" style="left:255px;top:375px;width:100px;height:43px;background:#fff;box-shadow:0 1px 2px rgba(200,60,60,.25)"><div class="a" style="left:0;top:19px;width:100px;text-align:center;font-size:6.2px;line-height:9px;color:#555;font-weight:bold;white-space:nowrap">上传图库系统</div></div><div class="a" style="left:364px;top:375px;width:100px;height:43px;background:#fff;box-shadow:0 1px 2px rgba(200,60,60,.25)"><div class="a" style="left:0;top:19px;width:100px;text-align:center;font-size:6.2px;line-height:9px;color:#555;font-weight:bold;white-space:nowrap">数据维护功能</div></div><div class="a" style="left:37.5px;top:425px;width:100px;height:43px;background:#fff;box-shadow:0 1px 2px rgba(200,60,60,.25)"><div class="a" style="left:0;top:19px;width:100px;text-align:center;font-size:6.2px;line-height:9px;color:#555;font-weight:bold;white-space:nowrap">在线客服系统</div></div><div class="a" style="left:146px;top:425px;width:100px;height:43px;background:#fff;box-shadow:0 1px 2px rgba(200,60,60,.25)"><div class="a" style="left:0;top:19px;width:100px;text-align:center;font-size:6.2px;line-height:9px;color:#555;font-weight:bold;white-space:nowrap">城市分站、多语言</div></div><div class="a" style="left:255px;top:425px;width:100px;height:43px;background:#fff;box-shadow:0 1px 2px rgba(200,60,60,.25)"><div class="a" style="left:0;top:19px;width:100px;text-align:center;font-size:6.2px;line-height:9px;color:#555;font-weight:bold;white-space:nowrap">自定义表单系统</div></div><div class="a" style="left:364px;top:425px;width:100px;height:43px;background:#fff;box-shadow:0 1px 2px rgba(200,60,60,.25)"><div class="a" style="left:0;top:19px;width:100px;text-align:center;font-size:6.2px;line-height:9px;color:#555;font-weight:bold;white-space:nowrap">更多扩展...</div></div><div class="a" style="left:482px;top:324.0px;width:6px;height:6px;border-radius:50%;border:1px solid rgba(200,120,120,.5);background:none"></div><div class="a" style="left:482px;top:335.8px;width:6px;height:6px;border-radius:50%;border:1px solid rgba(200,120,120,.5);background:#ff7a1a"></div><div class="a" style="left:482px;top:347.6px;width:6px;height:6px;border-radius:50%;border:1px solid rgba(200,120,120,.5);background:none"></div><div class="a" style="left:482px;top:359.4px;width:6px;height:6px;border-radius:50%;border:1px solid rgba(200,120,120,.5);background:none"></div><div class="a" style="left:482px;top:371.2px;width:6px;height:6px;border-radius:50%;border:1px solid rgba(200,120,120,.5);background:none"></div><div class="a" style="left:482px;top:383.0px;width:6px;height:6px;border-radius:50%;border:1px solid rgba(200,120,120,.5);background:none"></div><div class="a" style="left:482px;top:394.8px;width:6px;height:6px;border-radius:50%;border:1px solid rgba(200,120,120,.5);background:none"></div></div>
<div class="a" style="left:1506px;top:633px;width:68px;height:29px;background:#ff5722;color:#fff;font-size:12px;line-height:29px;text-align:center;border-radius:2px">编辑网站</div>
<div class="a" style="left:1584px;top:633px;width:68px;height:29px;background:#009688;color:#fff;font-size:12px;line-height:29px;text-align:center;border-radius:2px">选择模板</div>
<div class="a" style="left:1662px;top:633px;width:68px;height:29px;background:#009688;color:#fff;font-size:12px;line-height:29px;text-align:center;border-radius:2px">导出模板</div>
<div class="card" style="left:1351px;top:708px;width:545px;height:190px">
<div class="a" style="left:15px;top:13px;font-size:14px;line-height:18px;color:#333">站点测速</div>
<div class="a" style="left:75px;top:17px;width:9px;height:9px;border-radius:50%;background:#ff5722"></div>
<div class="a" style="left:83px;top:17px;width:9px;height:9px;border-radius:50%;background:#ffb800"></div>
<div class="a" style="left:91px;top:17px;width:9px;height:9px;border-radius:50%;background:#009688"></div>
<div class="a" style="left:99px;top:17px;width:9px;height:9px;border-radius:50%;background:#2f4056"></div>
<div class="a" style="right:15px;top:13px;font-size:14px;line-height:18px;color:#1e9fff">点击测试</div>
<div class="a" style="left:0;top:42px;width:545px;height:1px;background:#f0f0f0"></div>
<div class="a" style="left:15px;top:61px;font-size:26px;line-height:30px;color:#555">0s</div>
<div class="a" style="right:15px;top:66px;font-size:14px;line-height:18px;color:#999">下载用时(秒)</div>
<div class="a" style="left:15px;top:98px;width:515px;height:6px;border-radius:3px;background:#e2e2e2"></div>
<div class="a" style="left:15px;top:127px;font-size:26px;line-height:30px;color:#555">0m</div>
<div class="a" style="right:15px;top:132px;font-size:14px;line-height:18px;color:#999">下载速度(M/秒)</div>
<div class="a" style="left:15px;top:164px;width:515px;height:6px;border-radius:3px;background:#e2e2e2"></div>
</div>
<div class="card" style="left:1351px;top:913px;width:545px;height:30px"></div>
<div class="a" style="left:215px;top:79px;width:4px;height:849px;background:linear-gradient(90deg,rgba(0,0,0,.06),rgba(0,0,0,0))"></div>
<div class="a" style="left:1911px;top:78px;width:2px;height:850px;background:#bdbdbd"></div>
<div class="a" style="left:1905px;top:464px;width:7px;height:58px;border-radius:4px;background:linear-gradient(180deg,#9a9a9a 0%,#9a9a9a 62%,#27c463 62%,#6ee67a 100%)"></div>
<div class="a" style="left:0;top:926px;width:1913px;height:2px;background:#1e1e1e"></div>
<div class="a" style="left:94px;top:926px;width:48px;height:2px;background:#555"></div>
<div class="a" style="left:1744px;top:897px;width:144px;height:29px;background:#fff;border:1px solid #ccc"><svg class="a" style="left:-1px;top:-1px" width="144" height="29" viewBox="0 0 144 29"><circle cx="15.5" cy="14.4" r="9.8" fill="none" stroke="#4a7af5" stroke-width="1.8"/><text x="15.8" y="17" font-size="7.5" font-weight="bold" fill="#4a7af5" text-anchor="middle" font-family="Liberation Sans">iFLY</text><path d="M41 22.8 L47 7 L53 22.8 M43 17.5 H51" fill="none" stroke="#4a7af5" stroke-width="1.4"/><circle cx="71" cy="10.6" r="3.2" fill="#4a7af5"/><circle cx="78" cy="16.8" r="2.9" fill="#4a7af5"/><path d="M80.6 17.5 C80.5 20.5 78.5 22 75.5 22.5 L75.3 21.3 C77.2 20.8 78.5 19.6 78.3 17.6 Z" fill="#4a7af5"/><rect x="97.5" y="7" width="6.6" height="11" rx="3.3" fill="#4a7af5"/><path d="M95.3 14 A5.5 5.5 0 0 0 106.3 14 M100.8 19.5 V23" fill="none" stroke="#4a7af5" stroke-width="1.5"/><rect x="120.6" y="8.4" width="6.1" height="5.8" rx="0.6" fill="#4a7af5"/><rect x="120.6" y="16.3" width="6.1" height="6.1" rx="0.6" fill="#4a7af5"/><rect x="128.5" y="16.3" width="6.3" height="6.1" rx="0.6" fill="#4a7af5"/><path d="M131.6 7 L135.6 11 L131.6 15 L127.6 11 Z" fill="#4a7af5"/></svg></div>
</body></html>
